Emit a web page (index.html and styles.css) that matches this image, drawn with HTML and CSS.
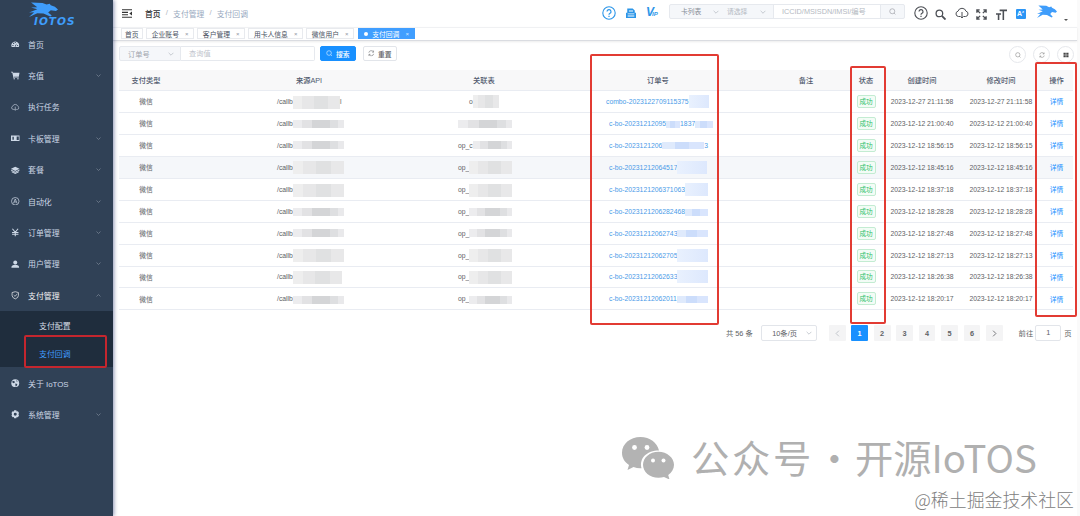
FILE: index.html
```html
<!DOCTYPE html>
<html lang="zh-CN">

<head>
  <meta charset="utf-8">
  <title>支付回调</title>
  <link rel="stylesheet" href="styles.css">
</head>

<body>
  <!-- shared icons -->
  <svg class="defs">
    <symbol id="i-down" viewBox="0 0 10 10"><path d="M1 3l4 4 4-4" fill="none" stroke="currentColor" stroke-width="1.2"/></symbol>
    <symbol id="i-search" viewBox="0 0 12 12"><circle cx="5.6" cy="5.6" r="4.3" fill="none" stroke="currentColor"/><path d="M8.7 8.7l2.3 2.3" stroke="currentColor"/></symbol>
    <symbol id="i-refresh" viewBox="0 0 12 12"><path d="M1.5 5A4.6 4.6 0 0 1 10 3.5M10.500 7A4.600 4.600 0 0 1 2 8.500M10.300 1v3H7.500M1.700 11V8h2.800" fill="none" stroke="currentColor"/></symbol>
    <symbol id="i-help" viewBox="0 0 14 14"><circle cx="7" cy="7" r="6.2" fill="none" stroke="currentColor" stroke-width="1.1"/><path d="M5 5.600a2 2 0 1 1 2.700 1.900Q7 7.900 7 8.800M7 9.800v1.200" fill="none" stroke="currentColor" stroke-width="1.200"/></symbol>
    <symbol id="i-cloud" viewBox="0 0 14 12"><path d="M5 9.500H3.500A2.700 2.700 0 0 1 3 4.200 4.200 4.200 0 0 1 11 4.200 2.700 2.700 0 0 1 10.500 9.500H9M7 5v6M5.400 9.300L7 11l1.600-1.700" fill="none" stroke="currentColor"/></symbol>
    <symbol id="i-horse" viewBox="0 0 28 15" preserveAspectRatio="none"><path d="M2 .5L13 1l4 1.500 3-.8 1 1.600 4 1.500 3 2.700-2 1.500-5-.8-2.500 2.300 3.500 3-1.500 1L14 11.500l-6-.2L0 15l5-4.800-5 .3 8-3.300-6-1.700 6-.3z" fill="#3f9dfb"/></symbol>
  </svg>

  <div class="app">
    <aside class="sidebar">
      <div class="logo">
        <svg class="logo-horse"><use href="#i-horse"/></svg>
        <span class="logo-text">IOTOS</span>
      </div>
      <ul class="menu">
        <li><svg viewBox="0 0 12 12"><path fill="currentColor" fill-rule="evenodd" d="M1 10a5.500 5.500 0 1 1 10 0zM5.200 9h1.600L8 4.500zM2 7h1.500v1.300H2zM3 4h1.500v1.500H3zM5.400 2.800h1.300v1.400H5.400zM8.800 7H10v1.300H8.800z"/></svg><span>首页</span></li>
        <li><svg viewBox="0 0 12 12"><path fill="currentColor" d="M0 1h2.500l.5 1.500h9L11 8H4.200l.2 1H11v1H3.500L1.800 2H0z"/><circle cx="4.500" cy="11" r="1" fill="currentColor"/><circle cx="9.800" cy="11" r="1" fill="currentColor"/></svg><span>充值</span><svg class="arrow"><use href="#i-down"/></svg></li>
        <li><svg viewBox="0 0 14 12"><use href="#i-cloud"/></svg><span>执行任务</span></li>
        <li><svg viewBox="0 0 12 12"><path fill="currentColor" fill-rule="evenodd" d="M0 2h12v8H0zM2 4v4h2V4zM8 3.500V8.500h3v-5z"/></svg><span>卡板管理</span><svg class="arrow"><use href="#i-down"/></svg></li>
        <li><svg viewBox="0 0 12 12"><path fill="currentColor" d="M6 1l6 3-6 3-6-3zM0 5l6 3 6-3v1.400l-6 3-6-3zM1 7.500l5 2.400 5-2.400v1.200L6 11.200 1 8.700z"/></svg><span>套餐</span><svg class="arrow"><use href="#i-down"/></svg></li>
        <li><svg viewBox="0 0 12 12" fill="none" stroke="currentColor"><circle cx="6" cy="6" r="5.300"/><path d="M3.500 9L6 2.800 8.500 9M4.500 7h3"/></svg><span>自动化</span><svg class="arrow"><use href="#i-down"/></svg></li>
        <li><svg viewBox="0 0 12 12" fill="none" stroke="currentColor" stroke-width="1.500"><path d="M2 1l4 5 4-5M6 6v5.500M1.500 6.300h9M1.500 8.800h9"/></svg><span>订单管理</span><svg class="arrow"><use href="#i-down"/></svg></li>
        <li><svg viewBox="0 0 12 12" fill="currentColor"><circle cx="6" cy="3.500" r="2.800"/><path d="M.5 11c0-3 2-4.200 5.500-4.200s5.500 1.200 5.500 4.200z"/></svg><span>用户管理</span><svg class="arrow"><use href="#i-down"/></svg></li>
        <li class="open"><svg viewBox="0 0 12 12" fill="none" stroke="currentColor"><path d="M6 1l4.500 1.200v4Q10.500 9.500 6 11.200 1.500 9.500 1.500 6.200v-4zM3.800 5.800l1.800 1.700L9 4.200"/></svg><span>支付管理</span><svg class="arrow"><use href="#i-down"/></svg></li>
      </ul>
      <ul class="submenu">
        <li>支付配置</li>
        <li class="active">支付回调</li>
      </ul>
      <ul class="menu">
        <li><svg viewBox="0 0 12 12"><circle cx="6" cy="6" r="5.500" fill="currentColor"/><path d="M2 2.500l3 .5.5 2-2 1-1.500-1zM6 6.500l3 .5-1 3-1.500.5zM7.500 1.500l2 1.500-1.500 1z" fill="#304156"/></svg><span>关于 IoTOS</span></li>
        <li><svg viewBox="0 0 12 12"><path fill="currentColor" fill-rule="evenodd" d="M4.500.5h3l.5 1.500 1.800-.2 1.500 2.500L10.500 6l.8 1.700-1.500 2.500L8 10l-.5 1.500h-3L4 10l-1.800.2L.7 7.700 1.500 6 .7 4.300l1.500-2.500L4 2zM6 3.900a2.100 2.100 0 1 0 0 4.200 2.100 2.100 0 0 0 0-4.200z"/></svg><span>系统管理</span><svg class="arrow"><use href="#i-down"/></svg></li>
      </ul>
    </aside>

    <main class="main">
      <header class="navbar">
        <svg class="hamburger" viewBox="0 0 10 9"><path d="M0 .8h10M0 3.400h6M0 5.800h6M0 8.200h10" stroke="#333" stroke-width="1.100"/><path d="M10 2.500v4L7.300 4.500z" fill="#333"/></svg>
        <nav class="breadcrumb"><b>首页</b><i>/</i><span>支付管理</span><i>/</i><span>支付回调</span></nav>
        <div class="quick">
          <svg viewBox="0 0 14 14"><use href="#i-help"/></svg>
          <svg class="doc" viewBox="0 0 12 12"><path fill="currentColor" fill-rule="evenodd" d="M2 0h6l2.500 2.500V5H12v6.500H0V5h1.500V0zM3.500 2.500v1h5v-1zM2 6v1h8V6zM2 8.500v1h8v-1z"/></svg>
          <span class="vip">V<small>IP</small></span>
        </div>
        <div class="card-search">
          <div class="sel dark">卡列表<svg><use href="#i-down"/></svg></div>
          <div class="sel">请选择<svg><use href="#i-down"/></svg></div>
          <div class="field">ICCID/MSISDN/IMSI/编号</div>
          <div class="go"><svg><use href="#i-search"/></svg></div>
        </div>
        <div class="tools">
          <svg viewBox="0 0 14 14"><use href="#i-help"/></svg>
          <svg class="mag" viewBox="0 0 12 12" fill="none" stroke="currentColor"><circle cx="4.800" cy="4.800" r="3.600" stroke-width="1.400"/><path d="M7.500 7.500l4 4" stroke-width="2"/></svg>
          <svg viewBox="0 0 14 12"><use href="#i-cloud"/></svg>
          <svg class="mag" viewBox="0 0 12 12" fill="none" stroke="currentColor" stroke-width="1.500"><path d="M1 4V1h3M1 1l3.500 3.500M8 1h3v3M11 1L7.500 4.500M1 8v3h3M1 11l3.500-3.500M8 11h3V8M11 11L7.500 7.500"/></svg>
          <svg class="mag" viewBox="0 0 12 12" fill="none" stroke="currentColor" stroke-width="1.700"><path d="M4 1.500h8M8 1.500V12M0 5.500h5.500M2.800 5.500V12"/></svg>
          <span class="lang">A<sup>z</sup></span>
          <svg class="avatar"><use href="#i-horse"/></svg>
          <i class="caret"></i>
        </div>
      </header>

      <div class="tags">
        <span class="tag home">首页</span>
        <span class="tag">企业账号<i>×</i></span>
        <span class="tag">客户管理<i>×</i></span>
        <span class="tag">用卡人信息<i>×</i></span>
        <span class="tag">微信用户<i>×</i></span>
        <span class="tag active">支付回调<i>×</i></span>
      </div>

      <section class="content">
        <div class="filter">
          <div class="type">订单号<svg><use href="#i-down"/></svg></div>
          <div class="value">查询值</div>
          <button class="btn primary"><svg><use href="#i-search"/></svg>搜索</button>
          <button class="btn"><svg><use href="#i-refresh"/></svg>重置</button>
          <div class="round-btns">
            <span><svg><use href="#i-search"/></svg></span>
            <span><svg><use href="#i-refresh"/></svg></span>
            <span><svg viewBox="0 0 12 12"><path d="M1 1.500h4.500v4H1zM6.500 1.500H11v4H6.500zM1 6.500h4.500v4H1zM6.500 6.500H11v4H6.500z" fill="#444"/></svg></span>
          </div>
        </div>

        <div class="table">
          <div class="row head">
            <div class="kind">支付类型</div>
            <div>来源API</div>
            <div>关联表</div>
            <div>订单号</div>
            <div>备注</div>
            <div>状态</div>
            <div>创建时间</div>
            <div>修改时间</div>
            <div>操作</div>
          </div>
          <div class="rows"></div>
        </div>

        <div class="pager">
          <span class="total">共 56 条</span>
          <span class="size">10条/页<svg><use href="#i-down"/></svg></span>
          <span class="page prev off"><svg><use href="#i-down"/></svg></span>
          <span class="page on">1</span>
          <span class="page">2</span>
          <span class="page">3</span>
          <span class="page">4</span>
          <span class="page">5</span>
          <span class="page">6</span>
          <span class="page next"><svg><use href="#i-down"/></svg></span>
          <span class="jump">前往<em>1</em>页</span>
        </div>
      </section>
    </main>
  </div>

  <!-- highlight frames -->
  <div class="frame frame-menu"></div>
  <div class="frame frame-order"></div>
  <div class="frame frame-status"></div>
  <div class="frame frame-action"></div>

  <div class="watermark">
    <svg viewBox="0 0 52 42"><path fill="#b3b3b3" d="M18.500 0C8 0 0 7 0 15.800 0 21 2.600 25 7 28l-1.500 5 6-3q4 1.500 8 1.200C17 21 25 13.500 37 13.500 35 5.500 28 0 18.500 0z"/><path fill="#b3b3b3" d="M36.500 14.800c-9 0-15.500 6-15.500 13s6.500 13 15.500 13q3 0 5.500-.8l5.500 2.500-1.300-4.500c3.500-2.500 5.800-6 5.800-10.200 0-7-7-13-15.500-13z"/><g fill="#fff"><circle cx="12.500" cy="10.500" r="2.400"/><circle cx="25" cy="10.500" r="2.400"/><circle cx="31" cy="23.500" r="2"/><circle cx="41.500" cy="23.500" r="2"/></g></svg>
    <span class="account">公众号</span>
    <span class="dot">·</span>
    <span>开源IoTOS</span>
  </div>
  <div class="community">@稀土掘金技术社区</div>

  <script src="script.js"></script>
</body>

</html>
```
FILE: styles.css
```css
* {
  margin: 0;
  padding: 0;
  box-sizing: border-box;
}

body {
  width: 1080px;
  height: 516px;
  overflow: hidden;
  position: relative;
  background: #fff;
  color: #606266;
  font-family: "Liberation Sans", "Noto Sans CJK SC", sans-serif;
  font-size: 6.8px;
}

ul {
  list-style: none;
}

i, em {
  font-style: normal;
}

svg {
  display: block;
  flex: none;
}

.defs {
  position: absolute;
  width: 0;
  height: 0;
}

.app {
  display: flex;
  height: 516px;
}

/* sidebar */
.sidebar {
  width: 112.5px;
  flex: none;
  background: #304156;
  box-shadow: 1px 0 4px rgba(0, 21, 90, .45);
  z-index: 1;
}

.logo {
  height: 28.500px;
  padding: 2px 0 0 29px;
}

.logo-horse {
  width: 29px;
  height: 15px;
}

.logo-text {
  display: block;
  margin: -1px 0 0 5px;
  width: 50px;
  font: italic bold 10.500px/10px "DejaVu Sans", sans-serif;
  letter-spacing: 1px;
  color: #3f9dfb;
}

.menu li {
  display: flex;
  align-items: center;
  height: 31.400px;
  padding: 0 11px;
  font-size: 7.900px;
  color: #cdd8e6;
}

.menu li span {
  flex: 1;
}

.menu li svg {
  width: 8.500px;
  height: 8.500px;
  margin-right: 8.500px;
}

.menu li .arrow {
  width: 5px;
  height: 5px;
  margin: 0 1px 0 0;
  color: #8995a4;
}

.menu .open {
  color: #f4f4f5;
}

.menu .open .arrow {
  transform: rotate(180deg);
}

.submenu {
  background: #1f2d3d;
}

.submenu li {
  height: 28.200px;
  padding-left: 39px;
  font-size: 7.900px;
  line-height: 31px;
  color: #d5dce5;
}

.submenu .active {
  color: #409eff;
}

/* top bar */
.main {
  flex: 1;
  border-right: 3px solid #fafafa;
}

.navbar {
  display: flex;
  align-items: center;
  height: 26.500px;
  padding-left: 9.500px;
}

.hamburger {
  width: 10px;
  height: 9px;
}

.breadcrumb {
  display: flex;
  width: 457px;
  margin-left: 13px;
  padding-top: 1px;
  font-size: 7.800px;
  color: #97a8be;
}

.breadcrumb b {
  font-weight: 500;
  color: #303133;
}

.breadcrumb i {
  width: 12.500px;
  text-align: center;
  color: #b0b6c0;
}

.quick {
  display: flex;
  align-items: center;
  width: 67px;
  gap: 10px;
  color: #2b95e8;
}

.quick svg {
  width: 14px;
  height: 14px;
}

.quick .doc {
  width: 10px;
  height: 11px;
}

.vip {
  font: italic bold 12px/12px "Liberation Sans", sans-serif;
}

.vip small {
  margin-left: -2px;
  font-size: 6px;
}

.card-search {
  display: flex;
  align-items: center;
  width: 236px;
  height: 15px;
  margin-top: -3px;
  border: 1px solid #e6e9ee;
  border-radius: 2px;
  background: #f5f7fa;
  color: #b4b9c2;
  line-height: 13px;
}

.sel {
  display: flex;
  align-items: center;
  justify-content: space-between;
  width: 47px;
  padding-left: 8px;
}

.sel.dark {
  width: 49px;
  padding-left: 11px;
  color: #888e98;
}

.sel svg, .type svg, .size svg {
  width: 6px;
  height: 6px;
  color: #b4b9c2;
}

.field {
  width: 108px;
  height: 13px;
  margin-left: 7px;
  padding-left: 8px;
  background: #fff;
  border-left: 1px solid #e6e9ee;
  border-right: 1px solid #e6e9ee;
  font-size: 7.300px;
  white-space: nowrap;
}

.go {
  flex: 1;
}

.go svg {
  width: 7px;
  height: 7px;
  margin: 0 auto;
  color: #909399;
}

.tools {
  display: flex;
  align-items: center;
  gap: 9px;
  margin-left: 8.500px;
  color: #4c4f55;
}

.tools svg {
  width: 14px;
  height: 14px;
  margin-right: -2px;
}

.tools .mag {
  width: 11px;
  height: 11px;
  margin: 3px 0 0;
}

.lang {
  width: 10px;
  height: 10px;
  margin-top: 2px;
  border-radius: 1px;
  background: #2b95f5;
  color: #fff;
  font: bold 7px/10px "Liberation Sans", sans-serif;
  text-align: center;
}

.lang sup {
  font-size: 4px;
  line-height: 1px;
}

.tools .avatar {
  width: 20px;
  height: 13px;
  margin: -4px 0 0 2px;
}

.caret {
  margin: 15px 0 0 -2px;
  border: 2px solid transparent;
  border-top: 2.500px solid #555;
}

/* tags */
.tags {
  display: flex;
  gap: 3px;
  height: 14.500px;
  padding: .5px 0 0 8px;
  border-top: 1px solid #f0f1f3;
  border-bottom: 1px solid #dadce1;
  box-shadow: 0 1px 2px rgba(0, 0, 0, .08);
}

.tag {
  display: flex;
  align-items: center;
  height: 11px;
  padding: 0 4.700px;
  border: 1px solid #e8eaee;
  color: #495060;
  white-space: nowrap;
}

.tag.home {
  padding: 0 3.500px;
}

.tag i {
  margin-left: 6px;
  color: #9297a0;
  font-size: 6px;
}

.tag.active {
  margin-left: 1px;
  padding: 0 5px;
  border-color: #409eff;
  background: #409eff;
  color: #fff;
}

.tag.active i {
  color: #d9ecff;
}

.tag.active:before {
  content: "";
  width: 4px;
  height: 4px;
  margin-right: 4px;
  border-radius: 50%;
  background: #fff;
}

/* filter bar */
.content {
  padding: 5px 4px 0 6.500px;
}

.filter {
  display: flex;
  align-items: center;
  height: 15px;
}

.type {
  display: flex;
  align-items: center;
  justify-content: space-between;
  width: 62px;
  height: 15px;
  padding: 0 6px 0 8px;
  border: 1px solid #e6e9ee;
  border-radius: 2px 0 0 2px;
  background: #f5f7fa;
  color: #a0a5ad;
}

.type, .value {
  font-size: 7.200px;
}

.value {
  width: 134px;
  height: 15px;
  padding-left: 8px;
  border: 1px solid #e6e9ee;
  border-left: 0;
  border-radius: 0 2px 2px 0;
  line-height: 13px;
  color: #c0c4cc;
}

.btn {
  display: flex;
  align-items: center;
  justify-content: center;
  gap: 3px;
  width: 34px;
  height: 15px;
  margin-left: 7px;
  border: 1px solid #e2e5ea;
  border-radius: 2px;
  background: #fff;
  color: #606266;
  font: 500 6.800px "Noto Sans CJK SC", sans-serif;
}

.btn.primary {
  width: 36px;
  margin-left: 5px;
  border-color: #1890ff;
  background: #1890ff;
  color: #fff;
}

.btn svg {
  width: 6.500px;
  height: 6.500px;
}

.round-btns {
  display: flex;
  gap: 7px;
  margin: 2px -1px 0 auto;
}

.round-btns span {
  display: flex;
  align-items: center;
  justify-content: center;
  width: 17px;
  height: 17px;
  border: 1px solid #e6e8ec;
  border-radius: 50%;
  color: #777;
}

.round-btns svg {
  width: 6px;
  height: 6px;
}

/* table */
.table {
  margin-top: 9px;
}

.row {
  display: grid;
  grid-template-columns: 85px 210px 140px 208px 88px 32px 80px 78px 33px;
  align-items: center;
  height: 21.950px;
  border-bottom: 1px solid #e9ecf2;
  text-align: center;
}

.row .kind {
  padding-right: 31px;
}

.row.head {
  height: 21px;
  background: #f8f8f9;
  color: #515a6e;
  font-size: 7.250px;
  font-weight: 500;
}

.row.hover {
  background: #f5f7fa;
}

.row .api, .row .rel, .row .order {
  display: flex;
  align-items: center;
  text-align: left;
}

.row .api {
  padding-left: 73px;
}

.row .rel {
  padding-left: 44px;
}

.row .order {
  padding-left: 55px;
  color: #4a9be8;
}

.row .order.wide {
  padding-left: 52px;
}

.row .rel.narrow {
  padding-left: 55px;
}

.api, .rel, .order, .time {
  white-space: nowrap;
}

/* blurred out values */
.mask {
  flex: none;
  height: 8px;
  background: linear-gradient(90deg, #ececee 0 18%, #e2e2e4 18% 38%, #d4d5d7 38% 72%, #dedfe1 72% 88%, #e9e9eb 88%);
}

.mask.tall {
  height: 13px;
  background: linear-gradient(90deg, #eee 0 20%, #e7e7e8 20% 45%, #e0e1e2 45% 75%, #e8e8e9 75%);
}

.order .mask {
  height: 7px;
  background: linear-gradient(90deg, #dfeafc 0 30%, #ccddfb 30% 65%, #d9e5fd 65%);
}

.order .mask.tall {
  height: 13px;
  background: linear-gradient(90deg, #e9f1fe, #dde8fd);
}

.ok {
  display: inline-block;
  width: 19px;
  height: 13px;
  border: 1px solid #c3ecd2;
  border-radius: 2px;
  background: #f3fcf6;
  color: #2fc26a;
  font-size: 6.600px;
  line-height: 11px;
  vertical-align: middle;
}

.detail {
  color: #1890ff;
}

/* pagination */
.pager {
  display: flex;
  align-items: center;
  justify-content: flex-end;
  height: 17px;
  margin-top: 14.500px;
  padding-right: 1.500px;
  font-size: 7.300px;
}

.total {
  margin-right: 8.500px;
}

.size {
  display: flex;
  align-items: center;
  justify-content: space-between;
  width: 56px;
  height: 16px;
  margin-right: 11.500px;
  padding: 0 4px 0 10px;
  border: 1px solid #e2e5ea;
  border-radius: 2px;
}

.page {
  display: flex;
  align-items: center;
  justify-content: center;
  width: 16.800px;
  height: 16px;
  margin-right: 5.700px;
  border-radius: 1px;
  background: #f4f4f5;
  font-weight: bold;
}

.page.on {
  background: #1890ff;
  color: #fff;
}

.page svg {
  width: 7px;
  height: 7px;
}

.prev svg {
  transform: rotate(90deg);
}

.next svg {
  transform: rotate(-90deg);
}

.page.off {
  color: #b8bcc4;
}

.jump {
  display: flex;
  align-items: center;
  margin-left: 10px;
}

.jump em {
  width: 26px;
  height: 16px;
  margin: 0 3px 0 2px;
  border: 1px solid #e2e5ea;
  border-radius: 2px;
  line-height: 14px;
  text-align: center;
}

/* highlight frames */
.frame {
  position: absolute;
  z-index: 2;
  border: 2px solid #e23b33;
  border-radius: 2px;
}

.frame-menu {
  left: 24px;
  top: 335px;
  width: 83px;
  height: 33px;
  border-color: #c4262e;
}

.frame-order {
  left: 590px;
  top: 54px;
  width: 129px;
  height: 271px;
}

.frame-status {
  left: 850px;
  top: 66px;
  width: 36px;
  height: 258px;
}

.frame-action {
  left: 1035px;
  top: 62px;
  width: 42px;
  height: 255px;
}

/* watermarks */
.watermark {
  position: absolute;
  left: 622px;
  top: 433px;
  display: flex;
  align-items: center;
  height: 48px;
  color: #b0b0b0;
  font: 38.300px/48px "Noto Sans CJK SC", sans-serif;
  white-space: nowrap;
}

.watermark svg {
  width: 52px;
  height: 42px;
  margin: 1px 17px 0 0;
}

.account {
  letter-spacing: 2.700px;
}

.dot {
  width: 41px;
  text-align: center;
}

.community {
  position: absolute;
  right: 6px;
  top: 486px;
  color: #808080;
  font: 300 17.900px/26px "Noto Sans CJK SC", sans-serif;
}
```
FILE: script.js
```js
// masks are [width, vertical shift, tall]
const rows = [
  { api: '/callb', apiMask: [47, 1, 1], apiEnd: 'l', rel: 'o', relMask: [26, 0, 1], order: 'combo-2023122709115375', mask: [20, 0, 1], time: '2023-12-27 21:11:58' },
  { api: '/callb', apiMask: [51, 1], rel: '', relMask: [54, 1], order: 'c-bo-20231212095', mid: [14, 1], tail: '1837', mask: [18, 1], time: '2023-12-12 21:00:40' },
  { api: '/callb', apiMask: [51, 0], rel: 'op_c', relMask: [39, 0], order: 'c-bo-2023121206', mask: [42, 0], end: '3', time: '2023-12-12 18:56:15' },
  { api: '/callb', apiMask: [51, 0, 1], rel: 'op_', relMask: [43, 0, 1], order: 'c-bo-20231212064517', mask: [30, 0, 1], time: '2023-12-12 18:45:16', hover: true },
  { api: '/callb', apiMask: [51, 1, 1], rel: 'op_', relMask: [43, 1, 1], order: 'c-bo-2023121206371063', mask: [23, 0, 1], time: '2023-12-12 18:37:18' },
  { api: '/callb', apiMask: [51, 1], rel: 'op_', relMask: [43, 1], order: 'c-bo-2023121206282468', mask: [23, 1], time: '2023-12-12 18:28:28' },
  { api: '/callb', apiMask: [51, 0], rel: 'op_', relMask: [43, 0], order: 'c-bo-20231212062743', mask: [31, 0], time: '2023-12-12 18:27:48' },
  { api: '/callb', apiMask: [51, 0, 1], rel: 'op_', relMask: [43, 0, 1], order: 'c-bo-20231212062705', mask: [31, 0, 1], time: '2023-12-12 18:27:13' },
  { api: '/callb', apiMask: [49, 1, 1], rel: 'op_', relMask: [43, 1, 1], order: 'c-bo-20231212062633', mask: [31, 0, 1], time: '2023-12-12 18:26:38' },
  { api: '/callb', apiMask: [51, 1], rel: 'op_', relMask: [43, 1], order: 'c-bo-20231212062011', mask: [31, 1], time: '2023-12-12 18:20:17' }
]

function mask(m) {
  if (!m) return ''
  return `<span class="mask${m[2] ? ' tall' : ''}" style="width:${m[0]}px;margin-top:${m[1] * 2}px"></span>`
}

document.querySelector('.rows').innerHTML = rows.map((r, i) => `
  <div class="row${r.hover ? ' hover' : ''}">
    <div class="kind">微信</div>
    <div class="api">${r.api}${mask(r.apiMask)}${r.apiEnd || ''}</div>
    <div class="rel${i === 0 ? ' narrow' : ''}">${r.rel}${mask(r.relMask)}</div>
    <div class="order${i === 0 ? ' wide' : ''}">${r.order}${mask(r.mid)}${r.tail || ''}${mask(r.mask)}${r.end || ''}</div>
    <div></div>
    <div><span class="ok">成功</span></div>
    <div class="time">${r.time}</div>
    <div class="time">${r.time}</div>
    <div class="detail">详情</div>
  </div>`).join('')
```
